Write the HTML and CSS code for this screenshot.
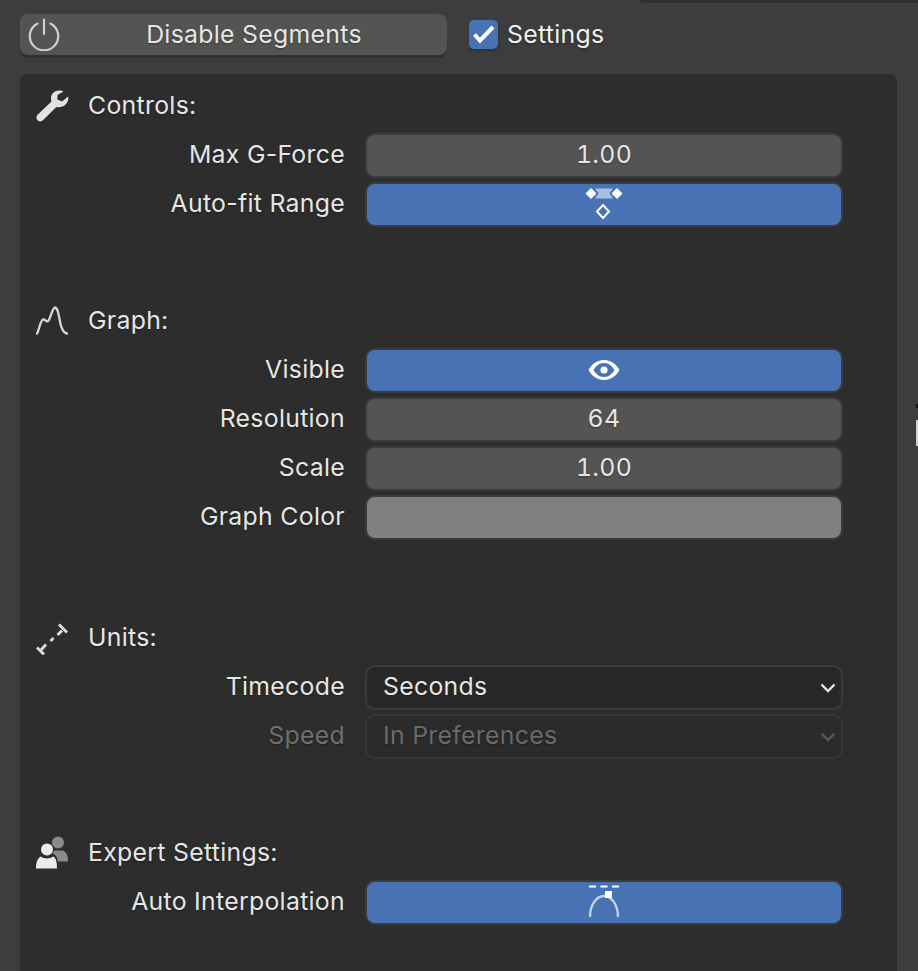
FILE: index.html
```html
<!DOCTYPE html>
<html lang="en">
<head>
    <meta charset="UTF-8">
    <meta name="viewport" content="width=device-width, initial-scale=1.0">
    <title>Settings</title>
    <link rel="stylesheet" href="styles.css">
</head>
<body>
    <div class="corner-strip"></div>
    <div class="edge-mark"></div>

    <div class="topbar">
        <button class="power-btn">
            <svg class="power-icon" width="34" height="34" viewBox="0 0 34 34" fill="none" stroke="#cfcfcf" stroke-width="2.2" stroke-linecap="round">
                <path d="M10.5 6.6A14.2 14.2 0 1 0 23.5 6.6"/>
                <path d="M17 2.5V17"/>
            </svg>
            Disable Segments
        </button>
        <label class="check">
            <span class="check-box">
                <svg width="29" height="29" viewBox="0 0 29 29" fill="none" stroke="#fff" stroke-width="4">
                    <path d="M5.500 14.500L11 20.500L24 7"/>
                </svg>
            </span>
            <span class="txt">Settings</span>
        </label>
    </div>

    <div class="panel">
        <div class="section section-controls">
            <div class="head">
                <svg class="head-icon" width="34" height="34" viewBox="0 0 34 34">
                    <path fill="#e2e2e2" d="M24.5 1.5C20 1.3 16.5 4.5 16 8.5C15.900 10 16.200 11.500 16.500 12.500L2.800 25.500C1 27.200 1 29.800 2.500 31.300C4 32.800 6.500 32.800 8.200 31.100L21.300 18C26.500 19 31.500 16.500 33 11.500C33.500 9.800 33.500 8.500 33.200 7.500L27 12.500L22.300 10.500L22.500 6L28.500 2.500C27.500 1.900 26 1.500 24.500 1.500Z"/>
                </svg>
                <span class="txt">Controls:</span>
            </div>
            <div class="row">
                <span class="label">Max G-Force</span>
                <div class="field">1.00</div>
            </div>
            <div class="row">
                <span class="label">Auto-fit Range</span>
                <div class="field on">
                    <svg width="40" height="34" viewBox="0 0 40 34">
                        <path fill="#a9bfe2" d="M11 1.500H29L25.500 6.500L29 11.500H11L14.500 6.500Z"/>
                        <path fill="#fff" d="M7 1L12.500 6.500L7 12L1.500 6.500Z"/>
                        <path fill="#fff" d="M33 1L38.500 6.500L33 12L27.500 6.500Z"/>
                        <path fill="none" stroke="#fff" stroke-width="2" d="M19 18L25 24.500L19 31L13 24.500Z"/>
                    </svg>
                </div>
            </div>
        </div>

        <div class="section section-graph">
            <div class="head">
                <svg class="head-icon" width="34" height="34" viewBox="0 0 34 34" fill="none" stroke="#d6d6d6" stroke-width="2.300" stroke-linecap="round">
                    <path d="M2 29.500C4 27 5 17 8 15.500C10 14.500 11 18.500 13 17C15.500 15.500 17 4 20 3.500C23 3.500 24 13 25.500 20C27 26.500 29 29 32 29.500"/>
                </svg>
                <span class="txt">Graph:</span>
            </div>
            <div class="row">
                <span class="label">Visible</span>
                <div class="field on">
                    <svg width="32" height="22" viewBox="0 0 32 22">
                        <path fill="#fff" fill-rule="evenodd" d="M16 1C24 1 29 6.500 31.500 11C29 15.500 24 21 16 21C8 21 3 15.500 .5 11C3 6.500 8 1 16 1ZM16 4C11 4 7.500 7.500 5.500 11C7.500 14.500 11 18 16 18C21 18 24.500 14.500 26.500 11C24.500 7.500 21 4 16 4Z"/>
                        <circle cx="16" cy="11" r="3.600" fill="#fff"/>
                    </svg>
                </div>
            </div>
            <div class="row">
                <span class="label">Resolution</span>
                <div class="field">64</div>
            </div>
            <div class="row">
                <span class="label">Scale</span>
                <div class="field">1.00</div>
            </div>
            <div class="row">
                <span class="label">Graph Color</span>
                <div class="field swatch"></div>
            </div>
        </div>

        <div class="section section-units">
            <div class="head">
                <svg class="head-icon" width="34" height="34" viewBox="0 0 34 34" fill="none" stroke="#dcdcdc" stroke-width="2.800">
                    <path d="M24 3.500L32 11.500"/>
                    <path d="M2 26.500L9 33.500"/>
                    <path d="M27 9.500L22.500 14"/>
                    <path d="M18.500 17L15.500 20"/>
                    <path d="M11 23.500L6 29"/>
                </svg>
                <span class="txt">Units:</span>
            </div>
            <div class="row">
                <span class="label">Timecode</span>
                <div class="select">
                    Seconds
                    <svg class="chev" width="16" height="10" viewBox="0 0 16 10" fill="none" stroke="#e6e6e6" stroke-width="2.400"><path d="M1.500 1.500L8 8L14.500 1.500"/></svg>
                </div>
            </div>
            <div class="row row-off">
                <span class="label">Speed</span>
                <div class="select">
                    In Preferences
                    <svg class="chev" width="16" height="10" viewBox="0 0 16 10" fill="none" stroke="#5a5a5a" stroke-width="2.400"><path d="M1.500 1.500L8 8L14.500 1.500"/></svg>
                </div>
            </div>
        </div>

        <div class="section">
            <div class="head">
                <svg class="head-icon" width="34" height="34" viewBox="0 0 34 34">
                    <circle cx="23" cy="6.500" r="6" fill="#8a8a8a"/>
                    <path fill="#8a8a8a" d="M20 14.500H27C31 15 33 19 33 25.500H23C22.500 21 20.500 18.500 17.500 17.500C18 16 19 14.500 20 14.500Z"/>
                    <circle cx="12" cy="13.500" r="6" fill="#ececec"/>
                    <path fill="#ececec" d="M6 20.500C8 23 16 23 18 20.500C21 21.500 22 26 22 32.500H1C1 26 3 21.500 6 20.500Z"/>
                </svg>
                <span class="txt">Expert Settings:</span>
            </div>
            <div class="row">
                <span class="label">Auto Interpolation</span>
                <div class="field on">
                    <svg width="32" height="36" viewBox="0 0 32 36" fill="none">
                        <path stroke="#fff" stroke-width="2" d="M1 2.500H8M12.500 2.500H19.500M24 2.500H31"/>
                        <path stroke="#c4d3ec" stroke-width="2.400" d="M2 33C2 20 9 12 16 12C23 12 30 20 30 33"/>
                        <rect x="17" y="7" width="7" height="7" fill="#fff"/>
                    </svg>
                </div>
            </div>
        </div>
    </div>
</body>
</html>
```

FILE: styles.css
```css
html, body {
    height: 100%;
}
body {
    margin: 0;
    height: 971px;
    overflow: hidden;
    box-sizing: border-box;
    padding: 14px 21px 0 20px;
    background-color: #3d3d3d;
    color: #e6e6e6;
    font-family: Inter, "Liberation Sans", sans-serif;
    font-size: 24.8px;
    letter-spacing: 0.3px;
    text-shadow: 0 1px 2px rgba(0, 0, 0, 0.35);
    position: relative;
}

/* bits of the neighbouring window */
.corner-strip {
    position: absolute;
    top: 0;
    left: 640px;
    right: 0;
    height: 3px;
    background-color: #303030;
    border-bottom-left-radius: 4px;
}
.edge-mark {
    position: absolute;
    top: 400px;
    left: 916px;
    width: 2px;
    height: 50px;
    background: linear-gradient(#3d3d3d 0, #3d3d3d 4px, #111 4px, #111 8px, #3d3d3d 8px, #3d3d3d 20px, #cfcfcf 20px, #cfcfcf 46px, #3d3d3d 46px);
}

.topbar {
    display: flex;
    align-items: flex-start;
    height: 60px;
}
.power-btn {
    position: relative;
    width: 427px;
    height: 41px;
    padding: 0 2px 2px 43px;
    border: none;
    border-radius: 8px;
    background-color: #545454;
    box-shadow: 0 3px 0 #303030;
    color: #e6e6e6;
    font: inherit;
    letter-spacing: inherit;
    text-shadow: inherit;
}
.power-icon {
    position: absolute;
    left: 7px;
    top: 3px;
}
.check {
    display: flex;
    align-items: center;
    gap: 9px;
    margin-left: 22px;
    height: 41px;
    color: #f0f0f0;
}
.check-box {
    display: block;
    width: 29px;
    height: 29px;
    border-radius: 5px;
    background-color: #4772b3;
    box-shadow: 0 2px 2px #303030;
}
.txt {
    padding-bottom: 2px;
}

.panel {
    height: 900px;
    box-sizing: border-box;
    padding: 10px 54px 0 0;
    background-color: #2d2d2d;
    border-radius: 8px 8px 0 0;
}
.section {
    display: flex;
    flex-direction: column;
    gap: 6px;
}
.section-controls {
    margin-bottom: 74px;
}
.section-graph {
    margin-bottom: 78px;
}
.section-units {
    margin-bottom: 74px;
}

.head {
    display: flex;
    align-items: center;
    height: 43px;
    padding-left: 15px;
    gap: 19px;
}
.head-icon {
    flex: none;
}

.row {
    display: grid;
    grid-template-columns: 325px 1fr;
    column-gap: 20px;
    height: 43px;
    align-items: center;
}
.label {
    padding-bottom: 4px;
    text-align: right;
}
.field, .select {
    box-sizing: border-box;
    height: 45px;
    border: 2px solid #3b3b3b;
    border-radius: 10px;
}
.field {
    display: flex;
    align-items: center;
    justify-content: center;
    padding-bottom: 4px;
    background-color: #545454;
    font-variant-numeric: tabular-nums;
}
.field.on {
    padding-bottom: 2px;
    background-color: #4772b3;
    color: #fff;
}
.field.swatch {
    background-color: #808080;
}
.select {
    display: flex;
    align-items: center;
    justify-content: space-between;
    padding: 0 5px 4px 16px;
    background-color: #282828;
}
.chev {
    margin-top: 5px;
}
.row-off .label {
    color: #6f6f6f;
}
.row-off .select {
    color: #6a6a6a;
    background-color: #2b2b2b;
    border-color: #363636;
}
```
